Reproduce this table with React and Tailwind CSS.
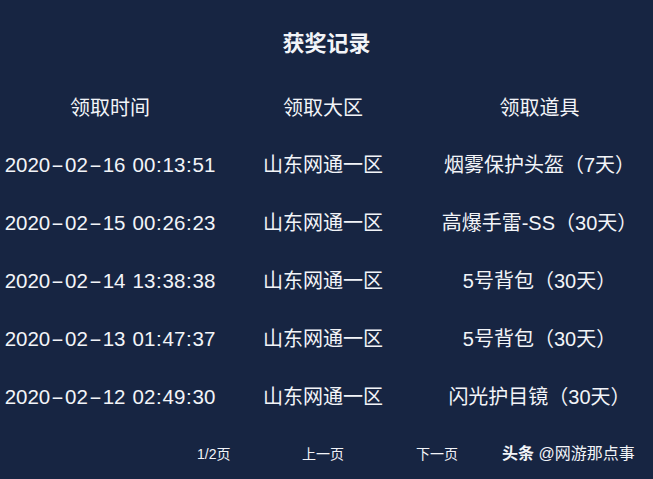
const rows = [
  { time: "2020-02-16 00:13:51", zone: "山东网通一区", item: "烟雾保护头盔（7天）" },
  { time: "2020-02-15 00:26:23", zone: "山东网通一区", item: "高爆手雷-SS（30天）" },
  { time: "2020-02-14 13:38:38", zone: "山东网通一区", item: "5号背包（30天）" },
  { time: "2020-02-13 01:47:37", zone: "山东网通一区", item: "5号背包（30天）" },
  { time: "2020-02-12 02:49:30", zone: "山东网通一区", item: "闪光护目镜（30天）" },
];

// 时间字符串：连字符在原图里更宽，拆开加点间距
function Time({ value }) {
  const [date, clock] = value.split(" ");
  const [y, m, d] = date.split("-");
  const [hh, mm, ss] = clock.split(":");
  return (
    <span className="whitespace-nowrap text-[20.5px]">
      {y}
      <span className="inline-block mx-[4px] scale-x-[1.9]">-</span>
      {m}
      <span className="inline-block mx-[4px] scale-x-[1.9]">-</span>
      {d}
      <span className="inline-block w-[7px]"> </span>
      {hh}
      <span className="mx-[0.75px]">:</span>
      {mm}
      <span className="mx-[0.75px]">:</span>
      {ss}
    </span>
  );
}

export default function App() {
  return (
    <div className="w-[653px] h-[479px] bg-[#172542] text-[#f2f4f8] overflow-hidden font-['Liberation_Sans','Noto_Sans_CJK_SC',sans-serif]">
      <h1 className="pt-[31px] text-center text-[22px] font-bold leading-[26px]">获奖记录</h1>

      {/* 表头 */}
      <div className="grid grid-cols-[220px_206px_1fr] mt-[39px] text-[20px] leading-[24px] text-center">
        <div>领取时间</div>
        <div>领取大区</div>
        <div>领取道具</div>
      </div>

      {/* 记录 */}
      <div className="mt-[33px] flex flex-col gap-[34px]">
        {rows.map((r) => (
          <div key={r.time} className="grid grid-cols-[220px_206px_1fr] text-[20px] leading-[24px] text-center">
            <div><Time value={r.time} /></div>
            <div>{r.zone}</div>
            <div className="whitespace-nowrap">{r.item}</div>
          </div>
        ))}
      </div>

      {/* 分页 */}
      <div className="mt-[36px] flex items-center text-[14px] leading-[18px]">
        <div className="ml-[197px] w-[105px]">1/2页</div>
        <div className="w-[114px]">上一页</div>
        <div className="w-[86px]">下一页</div>
        <div className="text-[16px] whitespace-nowrap">
          <span className="font-bold">头条</span> @网游那点事
        </div>
      </div>
    </div>
  );
}
